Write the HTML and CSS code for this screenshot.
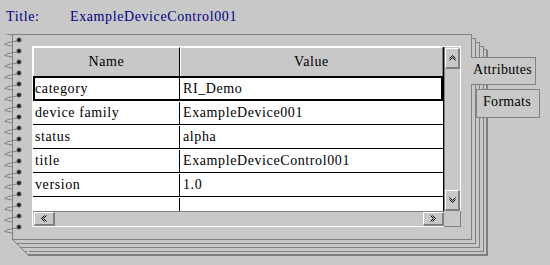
FILE: index.html
```html
<!DOCTYPE html>
<html lang="en">
<head>
  <meta charset="UTF-8">
  <title>Device Properties</title>
  <link rel="stylesheet" href="styles.css">
</head>
<body>

<!-- Title line -->
<div class="title-row">
  <span class="title-label">Title:</span>
  <span class="title-value">ExampleDeviceControl001</span>
</div>

<!-- Notebook (front page + stacked pages behind) -->
<div class="notebook">

  <!-- spiral binding on the left edge -->
  <svg class="binding" width="24" height="200" viewBox="0 0 24 200">
    <defs>
      <pattern id="ring" width="24" height="11" y="2" patternUnits="userSpaceOnUse">
        <path d="M17 5 L8 6.5 L4.5 8.5 L12 10" stroke="#808080" fill="none"/>
        <circle cx="19" cy="4" r="2.2" fill="#202020" stroke="#707070" stroke-width="0.6"/>
      </pattern>
    </defs>
    <rect x="0" y="0" width="24" height="200" fill="url(#ring)"/>
  </svg>

  <!-- slanted corner where the stacked pages meet -->
  <svg class="stack-corner" width="20" height="18" viewBox="0 0 20 18">
    <rect x="4" y="1" width="1" height="3" fill="#c8c8c8"/>
    <rect x="8" y="5" width="1" height="3" fill="#c8c8c8"/>
    <rect x="12" y="9" width="1" height="3" fill="#c8c8c8"/>
    <rect x="15" y="12" width="2" height="3" fill="#c8c8c8"/>
    <path d="M0.5 0.5 L16.5 16.5" stroke="#808080"/>
  </svg>

  <div class="grid-box">
    <div class="table-area">
      <div class="row head">
        <div class="cell name">Name</div>
        <div class="cell value">Value</div>
      </div>
      <div class="row selected">
        <div class="cell name">category</div>
        <div class="cell value">RI_Demo</div>
      </div>
      <div class="row">
        <div class="cell name">device family</div>
        <div class="cell value">ExampleDevice001</div>
      </div>
      <div class="row">
        <div class="cell name">status</div>
        <div class="cell value">alpha</div>
      </div>
      <div class="row">
        <div class="cell name">title</div>
        <div class="cell value">ExampleDeviceControl001</div>
      </div>
      <div class="row">
        <div class="cell name">version</div>
        <div class="cell value">1.0</div>
      </div>
      <div class="row filler">
        <div class="cell name"></div>
        <div class="cell value"></div>
      </div>
    </div>

    <div class="vscroll">
      <div class="sbtn up">
        <svg width="7" height="6" viewBox="0 0 7 6"><path d="M0.5 3.5 L3.5 0.5 L6.5 3.5 M0.5 5.5 L3.5 2.5 L6.5 5.5" stroke="#000" fill="none"/></svg>
      </div>
      <div class="sbtn down">
        <svg width="7" height="6" viewBox="0 0 7 6"><path d="M0.5 0.5 L3.5 3.5 L6.5 0.5 M0.5 2.5 L3.5 5.5 L6.5 2.5" stroke="#000" fill="none"/></svg>
      </div>
    </div>

    <div class="hscroll">
      <div class="sbtn left">
        <svg width="6" height="7" viewBox="0 0 6 7"><path d="M3.5 0.5 L0.5 3.5 L3.5 6.5 M5.5 0.5 L2.5 3.5 L5.5 6.5" stroke="#000" fill="none"/></svg>
      </div>
      <div class="sbtn right">
        <svg width="6" height="7" viewBox="0 0 6 7"><path d="M0.5 0.5 L3.5 3.5 L0.5 6.5 M2.5 0.5 L5.5 3.5 L2.5 6.5" stroke="#000" fill="none"/></svg>
      </div>
    </div>

    <div class="corner"></div>
  </div>

  <div class="tab active">Attributes</div>
  <div class="tab other">Formats</div>
</div>

</body>
</html>
```

FILE: styles.css
```css
body {
  margin: 0;
  width: 550px;
  height: 265px;
  overflow: hidden;
  background-color: #c8c8c8;
  color: #000;
  font-family: "Liberation Serif", "Times New Roman", serif;
  font-size: 14px;
  letter-spacing: 0.6px;
}

.title-row {
  display: flex;
  height: 34px;
  box-sizing: border-box;
  padding: 9px 0 0 6px;
  line-height: 16px;
  color: #000080;
}

.title-label {
  width: 64px;
}

/* front page, the pages behind it are box shadows */
.notebook {
  position: relative;
  margin-left: 12px;
  width: 460px;
  height: 206px;
  box-sizing: border-box;
  padding: 11px 10px 10px 19px;
  border: 1px solid #808080;
  background-color: #c8c8c8;
  box-shadow:
    4px 4px 0 -1px #c8c8c8,
    4px 4px 0 0 #808080,
    8px 8px 0 -1px #c8c8c8,
    8px 8px 0 0 #808080,
    12px 12px 0 -1px #c8c8c8,
    12px 12px 0 0 #808080,
    15px 15px 0 -1px #c8c8c8,
    15px 15px 0 0 #808080,
    16px 16px 0 0 #808080;
}

.binding {
  position: absolute;
  left: -13px;
  top: -1px;
}

.stack-corner {
  position: absolute;
  left: -1px;
  top: 204px;
}

.grid-box {
  display: grid;
  grid-template-columns: 411px 17px;
  grid-template-rows: 164px 16px;
  border-top: 1px solid #fff;
  border-left: 1px solid #fff;
}

.table-area {
  display: flex;
  flex-direction: column;
  background-color: #fff;
  border-right: 1px solid #000;
}

.row {
  display: grid;
  grid-template-columns: 147px 1fr;
  height: 24px;
  box-sizing: border-box;
  border-bottom: 1px solid #000;
  line-height: 22px;
  padding-top: 1px;
}

.cell {
  white-space: nowrap;
  overflow: hidden;
}

.cell.name {
  padding-left: 2px;
  border-right: 1px solid #000;
}

.cell.value {
  padding-left: 3px;
}

.row.head {
  height: 29px;
  padding-top: 0;
  border-bottom: none;
  background-color: #c8c8c8;
  line-height: 28px;
}

.row.head .cell {
  padding-left: 0;
  text-align: center;
  border-top: 1px solid #fff;
  border-left: 1px solid #fff;
}

.row.head .cell.value {
  border-right: 1px solid #808080;
}

.row.selected {
  height: 25px;
  grid-template-columns: 145px 1fr;
  border: 2px solid #000;
  padding-top: 0;
  line-height: 21px;
}

.row.selected .cell.name {
  padding-left: 0;
}

.row.filler {
  flex: 1;
  border-bottom: none;
}

.vscroll {
  display: flex;
  flex-direction: column;
  justify-content: space-between;
  padding: 1px 0 0;
  border-left: 1px solid #808080;
  border-right: 1px solid #fff;
}

.hscroll {
  display: flex;
  justify-content: space-between;
  padding-left: 1px;
  border-top: 1px solid #808080;
  border-bottom: 1px solid #fff;
}

.corner {
  border-right: 1px solid #808080;
  border-bottom: 1px solid #808080;
}

.sbtn {
  display: flex;
  align-items: center;
  justify-content: center;
  box-sizing: border-box;
  background-color: #c8c8c8;
  border-style: solid;
  border-width: 1px 2px 2px 1px;
  border-color: #fff #808080 #808080 #fff;
}

.sbtn.up,
.sbtn.down {
  width: 15px;
  height: 21px;
}

.sbtn.left,
.sbtn.right {
  width: 21px;
  height: 14px;
}

.tab {
  position: absolute;
  box-sizing: border-box;
  background-color: #c8c8c8;
  border: 1px solid #808080;
  line-height: 20px;
  padding-top: 2px;
  letter-spacing: 0.3px;
}

.tab.active {
  left: 458px;
  top: 22px;
  width: 65px;
  height: 28px;
  padding-left: 2px;
  border-left: none;
}

.tab.other {
  left: 463px;
  top: 54px;
  width: 64px;
  height: 29px;
  padding-left: 6px;
}
```
